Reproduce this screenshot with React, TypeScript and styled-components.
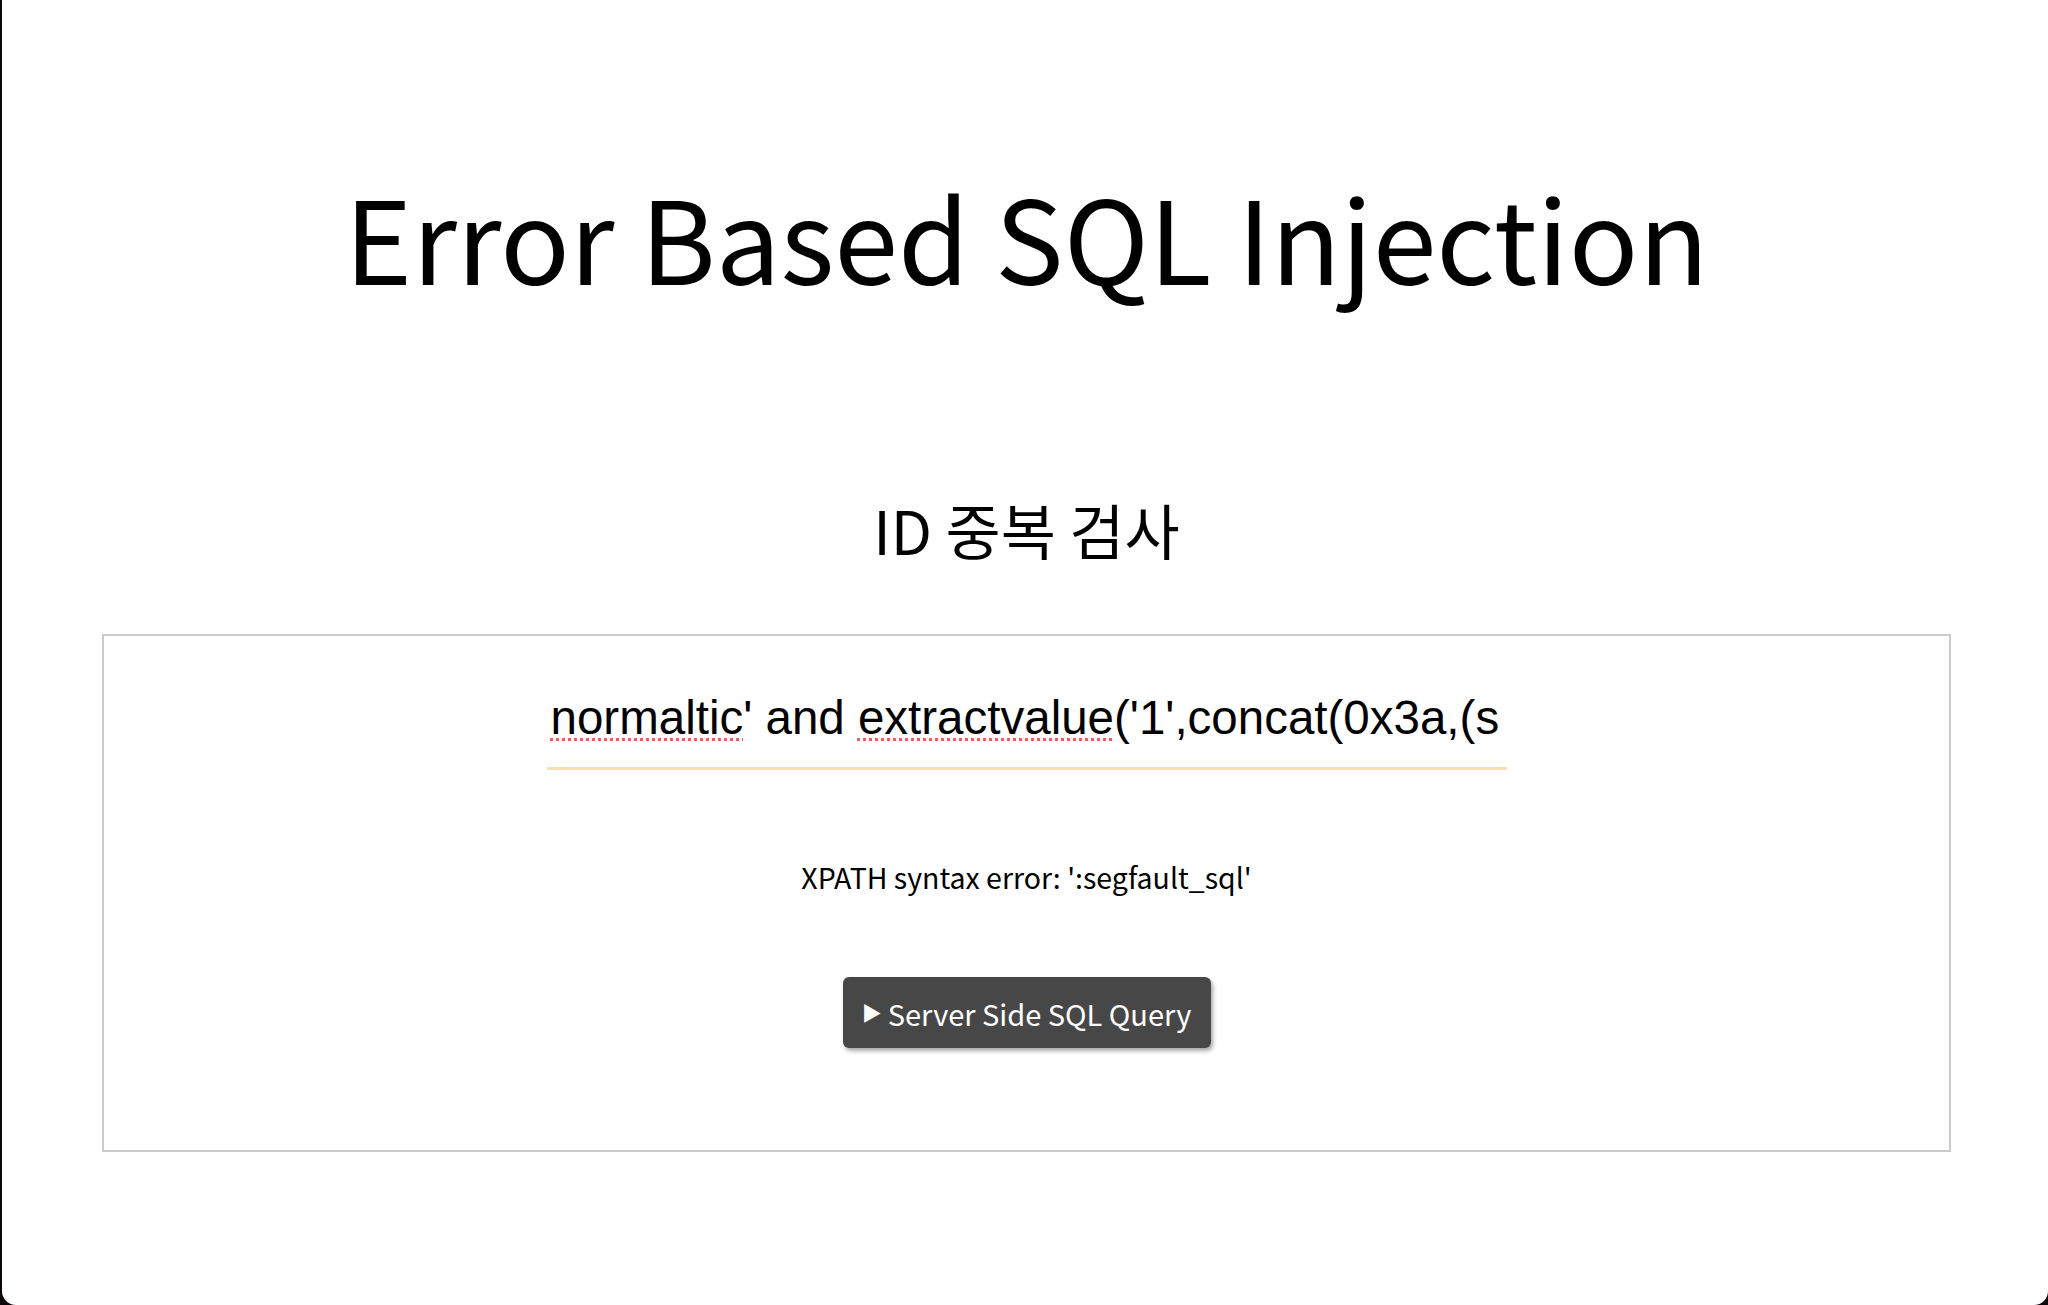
import React from 'react';
import styled, { createGlobalStyle } from 'styled-components';

const GlobalStyle = createGlobalStyle`
  html, body {
    margin: 0;
    padding: 0;
    background: #0d070c;
  }
  body {
    font-family: 'Noto Sans CJK KR', 'Noto Sans', sans-serif;
    color: #000;
  }
`;

const Window = styled.div`
  margin-left: 2px;
  min-height: 1305px;
  box-sizing: border-box;
  background: #fff;
  border-radius: 0 0 14px 14px;
  padding: 178px 97px 0 100px;
  display: flex;
  flex-direction: column;
  align-items: center;
`;

const Title = styled.h1`
  margin: 0;
  font-size: 115px;
  font-weight: 400;
  line-height: 1;
  white-space: nowrap;
`;

const SubTitle = styled.h2`
  margin: 206px 0 0;
  font-size: 60px;
  font-weight: 400;
  line-height: 1;
`;

const Panel = styled.section`
  margin-top: 75px;
  width: 100%;
  box-sizing: border-box;
  border: 2px solid #cbcbcb;
  padding: 58px 0 102px;
  display: flex;
  flex-direction: column;
  align-items: center;
`;

const Field = styled.div`
  width: 960px;
  box-sizing: border-box;
  padding: 0 4px 25px;
  border-bottom: 3px solid #f5deb3;
  font-family: 'Liberation Sans', Arial, sans-serif;
  font-size: 47.5px;
  line-height: 1;
  white-space: nowrap;
`;

const Misspelled = styled.span`
  text-decoration: underline dotted #e5625c;
  text-decoration-thickness: 3px;
  text-underline-offset: 4px;
`;

const ErrorText = styled.p`
  margin: 93px 0 0;
  font-size: 28.5px;
  line-height: 1;
`;

const QueryButton = styled.button`
  margin-top: 86px;
  width: 368px;
  height: 71px;
  border: none;
  border-radius: 6px;
  background: #474747;
  color: #fff;
  box-shadow: 2px 3px 4px rgba(0, 0, 0, 0.35);
  font-family: 'Noto Sans CJK KR', 'Noto Sans', sans-serif;
  font-size: 29px;
  display: flex;
  align-items: center;
  justify-content: center;
  gap: 6px;
  cursor: pointer;
`;

const Arrow = styled.span`
  font-size: 20px;
`;

export default function App() {
  return (
    <>
      <GlobalStyle />
      <Window>
        <Title>Error Based SQL Injection</Title>
        <SubTitle>ID 중복 검사</SubTitle>
        <Panel>
          <Field>
            <Misspelled>normaltic</Misspelled>' and <Misspelled>extractvalue</Misspelled>('1',concat(0x3a,(s
          </Field>
          <ErrorText>XPATH syntax error: ':segfault_sql'</ErrorText>
          <QueryButton>
            <Arrow>▶</Arrow>
            Server Side SQL Query
          </QueryButton>
        </Panel>
      </Window>
    </>
  );
}
